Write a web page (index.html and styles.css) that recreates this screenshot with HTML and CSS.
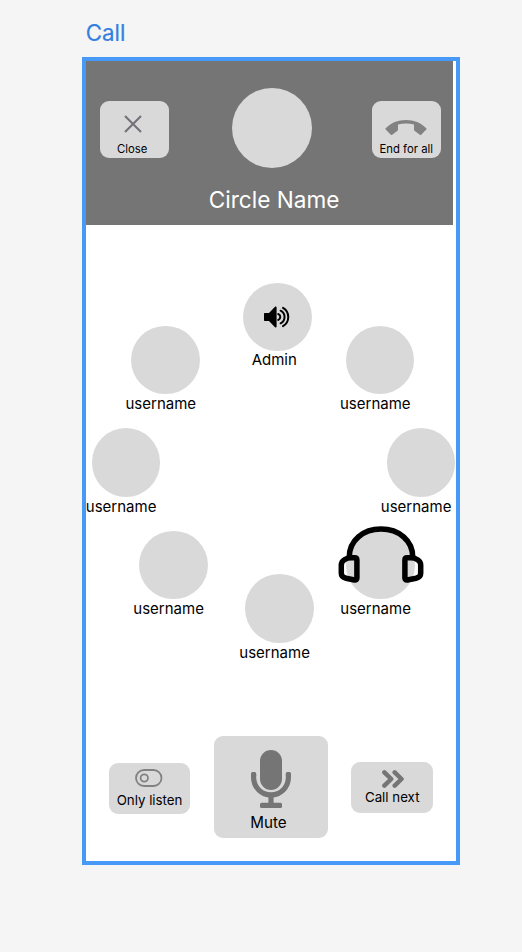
FILE: index.html
```html
<!DOCTYPE html>
<html lang="en">
<head>
<meta charset="utf-8">
<title>Call</title>
<link rel="stylesheet" href="styles.css">
</head>
<body>
<h1 class="frame-label">Call</h1>
<main class="frame">
  <header class="header">
    <div class="header-row">
      <button class="btn btn-top">
        <svg class="icon-close" width="18" height="18" viewBox="0 0 18 18"><path d="M1 1 17 17M17 1 1 17"/></svg>
        <span class="close-text">Close</span>
      </button>
      <div class="circle-avatar"></div>
      <button class="btn btn-top">
        <svg class="icon-end" width="42" height="17" viewBox="0 0 42 17"><path d="M.7 9.2C5.7 3.8 13 .9 21 .9s15.300 2.900 20.300 8.300c.4.5.4.900 0 1.300L36.200 15.800c-.4.400-.9.400-1.400 0L29.500 11.800c-.4-.3-.5-.6-.5-1V5.400C26.500 4.700 23.800 4.400 21 4.400s-5.500.3-8 1v5.400c0 .4-.1.700-.5 1L7.200 15.800c-.5.400-1 .4-1.400 0L.7 10.500c-.4-.4-.4-.8 0-1.300Z"/></svg>
        <span>End for all</span>
      </button>
    </div>
    <h2 class="title">Circle Name</h2>
  </header>

  <section class="ring">
    <div class="member m1"><div class="avatar">
      <svg class="icon-speaker" width="28" height="24" viewBox="0 0 28 24"><path d="M1.700 8H6l6-6.200c.6-.6 1.600-.3 1.600.6v19.200c0 .900-1 1.200-1.600.6L6 16H1.700c-.5 0-.7-.2-.7-.7V8.700c0-.5.2-.7.700-.7Z"/><path class="wave" d="M15.200 9a3.200 3.200 0 0 1 0 6M17.600 5.700a7 7 0 0 1 0 12.600M20 2.900a10.500 10.500 0 0 1 0 18.200"/></svg>
    </div><span class="name admin">Admin</span></div>
    <div class="member m2"><div class="avatar"></div><span class="name">username</span></div>
    <div class="member m3"><div class="avatar"></div><span class="name">username</span></div>
    <div class="member m4"><div class="avatar"></div><span class="name">username</span></div>
    <div class="member m5"><div class="avatar"></div><span class="name">username</span></div>
    <div class="member m6"><div class="avatar"></div><span class="name">username</span></div>
    <div class="member m7"><div class="avatar"></div><span class="name">username</span>
      <svg class="icon-headphones" width="86" height="57" viewBox="0 0 86 57"><path d="M11.300 32V31C11.300 14.500 25 3 43 3s31.700 11.500 31.700 28v1"/><path d="M13.500 31.800h3.200c1.500 0 2.200.8 2.200 2.200v18c0 1.600-.8 2.200-2.400 2L8 52.200c-3-.7-4.700-2.300-4.700-5V39c0-4.500 5-7.200 10.200-7.200ZM72.500 31.800h-3.400c-1.500 0-2.200.8-2.200 2.200v18c0 1.600.8 2.200 2.400 2L78 52.200c3-.7 4.700-2.300 4.700-5V39c0-4.500-5-7.200-10.200-7.200Z"/></svg>
    </div>
    <div class="member m8"><div class="avatar"></div><span class="name">username</span></div>
  </section>

  <footer class="controls">
    <button class="btn btn-side btn-listen">
      <svg class="icon-toggle" width="28" height="18" viewBox="0 0 28 18"><rect x="1" y="1" width="25.500" height="16" rx="8"/><circle cx="9.300" cy="9" r="3.700"/></svg>
      <span>Only listen</span>
    </button>
    <button class="btn btn-mute">
      <svg class="icon-mic" width="42" height="60" viewBox="0 0 42 60"><rect x="10" y="0" width="22" height="40" rx="11"/><path class="cradle" d="M3.600 25v2.500a17.400 17.400 0 0 0 34.800 0V25"/><path d="M1 23.500a1.500 1.500 0 0 1 1.500-1.500h2.200a1.500 1.500 0 0 1 1.500 1.500V26H1ZM35.800 23.500a1.500 1.500 0 0 1 1.500-1.500h2.200a1.500 1.500 0 0 1 1.500 1.500V26h-5.200ZM18.400 46h5.200v8h-5.200Z"/><rect x="10" y="52.800" width="22" height="5.200" rx="1.500"/></svg>
      <span>Mute</span>
    </button>
    <button class="btn btn-side btn-next">
      <svg class="icon-next" width="22" height="18" viewBox="0 0 22 18"><path d="M2.400 2.400 9.200 9l-6.800 6.600M12.700 2.400 19.500 9l-6.800 6.600"/></svg>
      <span>Call next</span>
    </button>
  </footer>
</main>
</body>
</html>
```
FILE: styles.css
```css
* { box-sizing: border-box; }
body {
  margin: 0;
  padding: 18px 0 0 82px;
  background: #f5f5f5;
  font-family: Inter, sans-serif;
  color: #000;
}
svg { display: block; flex: none; }
.frame-label {
  margin: 0 0 9px 3.800px;
  height: 30px;
  font-size: 22.300px;
  line-height: 29px;
  font-weight: 400;
  color: #3480e0;
  -webkit-text-stroke: .2px #3480e0;
}
.frame {
  display: flex;
  flex-direction: column;
  width: 378px;
  height: 808px;
  border: 4px solid #4799f7;
  background: #fff;
}
.header {
  width: 367px;
  height: 163.500px;
  padding-top: 27px;
  background: #757575;
}
.header-row {
  display: flex;
  align-items: center;
  justify-content: space-between;
  padding: 0 12.500px 0 14px;
}
.circle-avatar {
  width: 80px;
  height: 80px;
  margin-left: 3px;
  border-radius: 50%;
  background: #d9d9d9;
}
.title {
  margin: 17px 0 0 9px;
  font-size: 22.600px;
  line-height: 30px;
  font-weight: 400;
  text-align: center;
  color: #fff;
}
.btn {
  display: flex;
  flex-direction: column;
  align-items: center;
  flex: none;
  padding: 0;
  border: 0;
  border-radius: 9px;
  background: #d9d9d9;
  font-family: inherit;
  color: #000;
  white-space: nowrap;
}
.btn-top {
  width: 68.500px;
  height: 57px;
  margin-top: 3px;
  font-size: 11.300px;
  line-height: 14px;
}
.icon-close { margin: 14px 3.500px 9px 0; fill: none; stroke: #757079; stroke-width: 2.100; }
.close-text { margin-right: 4px; }
.icon-end { margin: 18px 0 6px; fill: #828282; }
.ring { position: relative; flex: 1; }
.member { position: absolute; width: 68.500px; }
.avatar {
  display: flex;
  align-items: center;
  justify-content: center;
  width: 68.500px;
  height: 68.500px;
  border-radius: 50%;
  background: #d9d9d9;
}
.name {
  display: block;
  margin-left: -5.700px;
  font-size: 15px;
  line-height: 20px;
  white-space: nowrap;
}
.admin { margin-left: 8.500px; line-height: 18px; }
.m1 { left: 157.200px; top: 58px; }
.m2 { left: 45.200px; top: 101.300px; }
.m3 { left: 259.700px; top: 101.300px; }
.m4 { left: 5.500px; top: 203.900px; }
.m5 { left: 300.500px; top: 203.900px; }
.m6 { left: 53px; top: 306.300px; }
.m7 { left: 260px; top: 306.300px; }
.m8 { left: 159px; top: 349.900px; }
.icon-speaker { margin-right: 1px; }
.wave { fill: none; stroke: #000; stroke-width: 2; stroke-linecap: round; }
.icon-headphones {
  position: absolute;
  left: -8.200px;
  top: -5px;
  fill: none;
  stroke: #000;
  stroke-width: 5.500;
  stroke-linejoin: round;
}
.controls {
  display: flex;
  align-items: flex-start;
  gap: 23.500px;
  height: 125px;
  padding-left: 22.700px;
}
.btn-side { width: 81.700px; height: 51px; font-size: 13.300px; line-height: 16px; }
.btn-listen { margin-top: 27px; }
.btn-next { margin-top: 26px; }
.btn-mute { width: 114px; height: 102px; font-size: 15.200px; line-height: 18px; }
.btn-mute span { margin: 4px 5px 0 0; }
.icon-toggle { margin: 6px 1px 5px 0; fill: none; stroke: #828282; stroke-width: 1.800; }
.icon-mic { margin: 14px 0 0; fill: #757575; }
.cradle { fill: none; stroke: #757575; stroke-width: 5.200; }
.icon-next { margin: 8px 0 1px 1px; fill: none; stroke: #757575; stroke-width: 4.500; stroke-linecap: round; stroke-linejoin: round; }
```
